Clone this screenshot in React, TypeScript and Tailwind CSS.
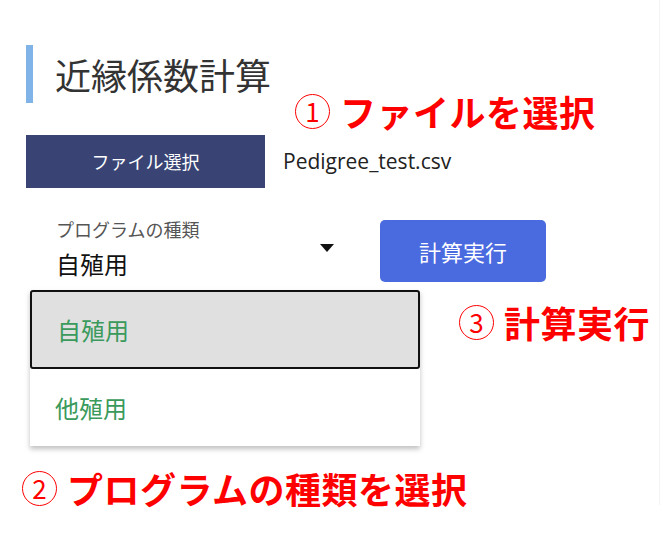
const jp = "font-['Noto_Sans_CJK_JP','Noto_Sans',sans-serif]";

function Annotation({ mark, text, className }: { mark: string; text: string; className: string }) {
  return (
    <div className={`absolute flex items-center whitespace-nowrap font-bold text-[#ff0000] ${jp} ${className}`}>
      <span className="flex h-[35px] w-[35px] shrink-0 items-center justify-center rounded-full border-[1.5px] border-[#ff0000] text-[26px] font-normal leading-none">
        {mark}
      </span>
      <span className="ml-[10px] text-[36px] leading-none tracking-[0.5px]">{text}</span>
    </div>
  );
}

function ProgramMenu() {
  return (
    <div className="absolute left-[30px] top-[290px] w-[390px] bg-white shadow-[0_3px_5px_rgba(0,0,0,0.25)]">
      <div className="flex h-[79px] items-center rounded-[3px] border-2 border-[#111] bg-[#e0e0e0] pl-[25px] text-[24px] text-[#3a9a5c]">
        自殖用
      </div>
      <div className="flex h-[77px] items-center pl-[25px] text-[24px] text-[#3a9a5c]">
        他殖用
      </div>
    </div>
  );
}

export default function App() {
  return (
    <div className={`relative h-[533px] w-[671px] overflow-hidden bg-white ${jp}`}>
      <div className="h-[505px] w-[660px] border-r border-[#f4f4f4] pl-[26px] pt-[45px]">
        {/* title */}
        <div className="flex items-center">
          <div className="h-[58px] w-[7px] bg-[#80b3e8]" />
          <h1 className="ml-[22px] text-[36px] leading-none text-[#333]">近縁係数計算</h1>
        </div>

        {/* file */}
        <div className="mt-[32px] flex items-center">
          <button className="h-[53px] w-[239px] bg-[#394475] text-[18px] text-white">ファイル選択</button>
          <span className="ml-[18px] font-['Open_Sans',sans-serif] text-[21px] text-[#222]">Pedigree_test.csv</span>
        </div>

        {/* program select + run */}
        <div className="mt-[32px] flex items-start">
          <div className="relative ml-[4px] h-[70px] w-[315px] pl-[26px]">
            <div className="text-[18px] leading-[18px] text-[#555]">プログラムの種類</div>
            <div className="mt-[11px] text-[24px] leading-[30px] text-[#111]">自殖用</div>
            <svg className="absolute right-[11px] top-[24px]" width="14" height="8" viewBox="0 0 14 8">
              <path d="M0 0h14L7 8z" fill="#111" />
            </svg>
          </div>
          <button className="ml-[35px] h-[62px] w-[166px] rounded-[5px] bg-[#4a6ae0] text-[22px] text-white">
            計算実行
          </button>
        </div>
      </div>

      <ProgramMenu />

      <Annotation mark="1" text="ファイルを選択" className="left-[295px] top-[93px]" />
      <Annotation mark="3" text="計算実行" className="left-[459px] top-[304px]" />
      <Annotation mark="2" text="プログラムの種類を選択" className="left-[22px] top-[470px]" />
    </div>
  );
}
